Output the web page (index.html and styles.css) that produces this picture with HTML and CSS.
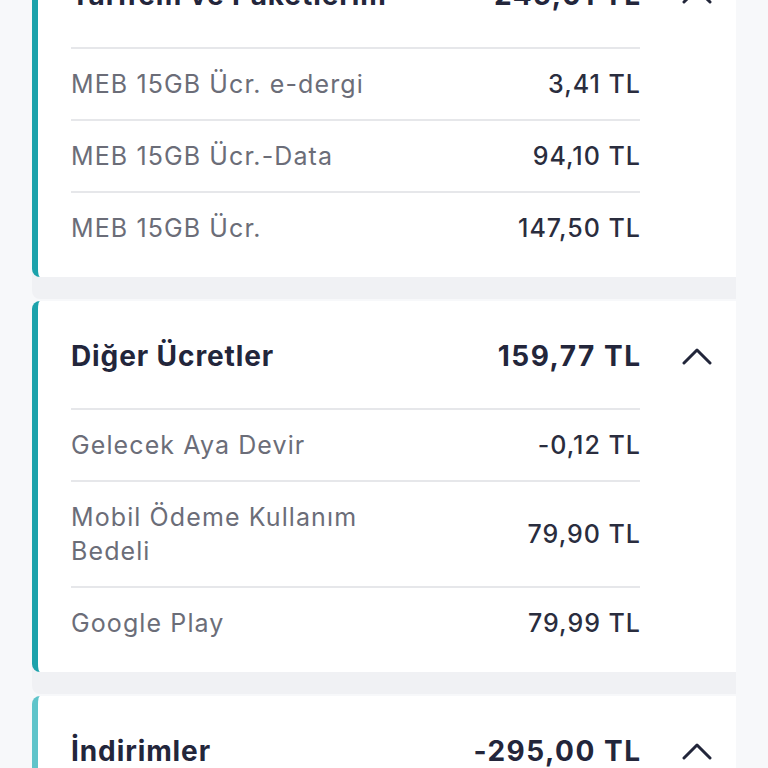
FILE: index.html
```html
<!DOCTYPE html>
<html lang="tr">
<head>
<meta charset="utf-8">
<link rel="stylesheet" href="styles.css">
</head>
<body>
<main class="list">
  <section class="card">
    <div class="head">
      <span class="title">Tarifem ve Paketlerim</span>
      <span class="total">245,01 TL</span>
      <span class="chev"><svg width="30" height="18" viewBox="0 0 30 18"><path d="M2 16 L15 3 L28 16" fill="none" stroke="#22263a" stroke-width="3" stroke-linecap="round" stroke-linejoin="round"/></svg></span>
    </div>
    <div class="row"><span class="name">MEB 15GB Ücr. e-dergi</span><span class="amt">3,41 TL</span></div>
    <div class="row"><span class="name">MEB 15GB Ücr.-Data</span><span class="amt">94,10 TL</span></div>
    <div class="row"><span class="name">MEB 15GB Ücr.</span><span class="amt">147,50 TL</span></div>
  </section>
  <section class="card">
    <div class="head">
      <span class="title">Diğer Ücretler</span>
      <span class="total">159,77 TL</span>
      <span class="chev"><svg width="30" height="18" viewBox="0 0 30 18"><path d="M2 16 L15 3 L28 16" fill="none" stroke="#22263a" stroke-width="3" stroke-linecap="round" stroke-linejoin="round"/></svg></span>
    </div>
    <div class="row"><span class="name">Gelecek Aya Devir</span><span class="amt">-0,12 TL</span></div>
    <div class="row"><span class="name wrap">Mobil Ödeme Kullanım Bedeli</span><span class="amt">79,90 TL</span></div>
    <div class="row"><span class="name">Google Play</span><span class="amt">79,99 TL</span></div>
  </section>
  <section class="card light">
    <div class="head">
      <span class="title">İndirimler</span>
      <span class="total">-295,00 TL</span>
      <span class="chev"><svg width="30" height="18" viewBox="0 0 30 18"><path d="M2 16 L15 3 L28 16" fill="none" stroke="#22263a" stroke-width="3" stroke-linecap="round" stroke-linejoin="round"/></svg></span>
    </div>
  </section>
</main>
</body>
</html>
```
FILE: styles.css
```css
html, body {
  margin: 0;
  padding: 0;
  background: #f7f8fa;
  height: 768px;
  overflow: hidden;
}
body {
  font-family: "Inter", "Lato", "Noto Sans", sans-serif;
  color: #23263b;
}
.list {
  margin-top: -60px;
  padding: 0 32px;
  display: flex;
  flex-direction: column;
  gap: 24px;
}
.card {
  background: #ffffff;
  border-left: 6px solid #1ca2ab;
  border-radius: 8px 0 0 8px;
  padding: 0 96px 14px 33px;
  box-shadow: 0 22px 0 0 #f0f1f4;
}
.card.light {
  border-left-color: #5fc4ca;
  padding-bottom: 200px;
}
.head {
  display: flex;
  align-items: center;
  padding: 38px 0 35px;
  line-height: 34px;
}
.title {
  flex: 1;
  font-size: 28px;
  font-weight: 700;
  color: #23263b;
  letter-spacing: 0.9px;
}
.total {
  font-size: 28px;
  font-weight: 700;
  color: #23263b;
  letter-spacing: 1.5px;
  margin-right: -1.5px;
}
.chev {
  width: 96px;
  margin-right: -96px;
  display: flex;
  justify-content: center;
  align-items: center;
  padding-left: 18px;
  box-sizing: border-box;
}
.chev svg {
  display: block;
}
.row {
  display: flex;
  align-items: center;
  border-top: 2px solid #e6e7ea;
  padding: 18px 0;
  line-height: 34px;
  font-size: 25px;
}
.name {
  color: #6b6d78;
  letter-spacing: 1.1px;
}
.name.wrap {
  max-width: 320px;
}
.amt {
  margin-left: auto;
  color: #2a2d3e;
  font-weight: 500;
  letter-spacing: 1px;
  margin-right: -1px;
}
```
